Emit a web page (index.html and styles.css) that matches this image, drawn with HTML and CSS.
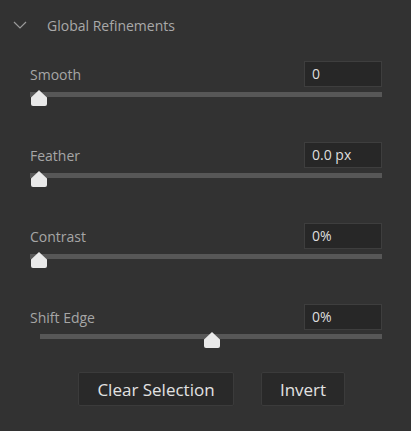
FILE: index.html
```html
<!DOCTYPE html>
<html lang="en">
<head>
	<meta charset="UTF-8">
	<title>Global Refinements</title>
<link rel="stylesheet" href="styles.css">
</head>
<body>
	<div id="panel">
		<div class="header">
			<svg class="chevron" width="14" height="8" viewBox="0 0 14 8"><path d="M1 1 L7 7 L13 1" fill="none" stroke="#9a9a9a" stroke-width="1.2"/></svg>
			<span class="title">Global Refinements</span>
		</div>

		<div class="row">
			<div class="row-top">
				<span class="label">Smooth</span>
				<div class="field">0</div>
			</div>
			<div class="track">
				<svg class="thumb" style="left: 1px" width="16" height="16" viewBox="0 0 16 16"><path d="M8 0 L16 7.5 L16 14 Q16 16 14 16 L2 16 Q0 16 0 14 L0 7.5 Z" fill="#e9e9e9"/></svg>
			</div>
		</div>

		<div class="row">
			<div class="row-top">
				<span class="label">Feather</span>
				<div class="field">0.0 px</div>
			</div>
			<div class="track">
				<svg class="thumb" style="left: 1px" width="16" height="16" viewBox="0 0 16 16"><path d="M8 0 L16 7.5 L16 14 Q16 16 14 16 L2 16 Q0 16 0 14 L0 7.5 Z" fill="#e9e9e9"/></svg>
			</div>
		</div>

		<div class="row">
			<div class="row-top">
				<span class="label">Contrast</span>
				<div class="field">0%</div>
			</div>
			<div class="track">
				<svg class="thumb" style="left: 1px" width="16" height="16" viewBox="0 0 16 16"><path d="M8 0 L16 7.5 L16 14 Q16 16 14 16 L2 16 Q0 16 0 14 L0 7.5 Z" fill="#e9e9e9"/></svg>
			</div>
		</div>

		<div class="row last">
			<div class="row-top">
				<span class="label">Shift Edge</span>
				<div class="field">0%</div>
			</div>
			<div class="track centered">
				<svg class="thumb" style="left: 164px" width="16" height="16" viewBox="0 0 16 16"><path d="M8 0 L16 7.5 L16 14 Q16 16 14 16 L2 16 Q0 16 0 14 L0 7.5 Z" fill="#e9e9e9"/></svg>
			</div>
		</div>

		<div class="buttons">
			<button class="btn clear">Clear Selection</button>
			<button class="btn invert">Invert</button>
		</div>
	</div>
</body>
</html>
```

FILE: styles.css
```css
html,body,div,span,button{padding: 0;margin: 0;}
body{
	background: #323232;
	font-family: "Open Sans", "Noto Sans", sans-serif;
}
#panel{
	width: 411px;
	height: 431px;
	padding: 0 29px 0 30px;
	box-sizing: border-box;
}
.header{
	height: 50px;
	display: flex;
	align-items: center;
	margin-left: -17px;
	margin-bottom: 11px;
}
.chevron{
	margin-right: 20px;
	margin-top: -1px;
}
.title{
	font-size: 14px;
	color: #a9a9a9;
}
.row{
	margin-bottom: 45px;
}
.row.last{
	margin-bottom: 0;
}
.row-top{
	display: flex;
	justify-content: space-between;
	align-items: center;
	height: 26px;
}
.label{
	font-size: 14px;
	color: #a6a6a6;
}
.field{
	width: 78px;
	height: 26px;
	box-sizing: border-box;
	background: #272727;
	border: 1px solid #3e3e3e;
	color: #dedede;
	font-size: 14px;
	line-height: 24px;
	padding-left: 7px;
}
.track{
	height: 5px;
	margin-top: 5px;
	background: #575757;
	position: relative;
}
.track.centered{
	margin-left: 10px;
	margin-top: 4px;
}
.thumb{
	position: absolute;
	top: -2px;
}
.buttons{
	display: flex;
	gap: 27px;
	margin-top: 33px;
	margin-left: 48px;
}
.btn{
	height: 34px;
	background: #292929;
	border: 1px solid #3b3b3b;
	border-radius: 2px;
	color: #e2e2e2;
	font-family: "Open Sans", "Noto Sans", sans-serif;
	font-size: 17px;
}
.clear{
	width: 156px;
}
.invert{
	width: 84px;
}
```
